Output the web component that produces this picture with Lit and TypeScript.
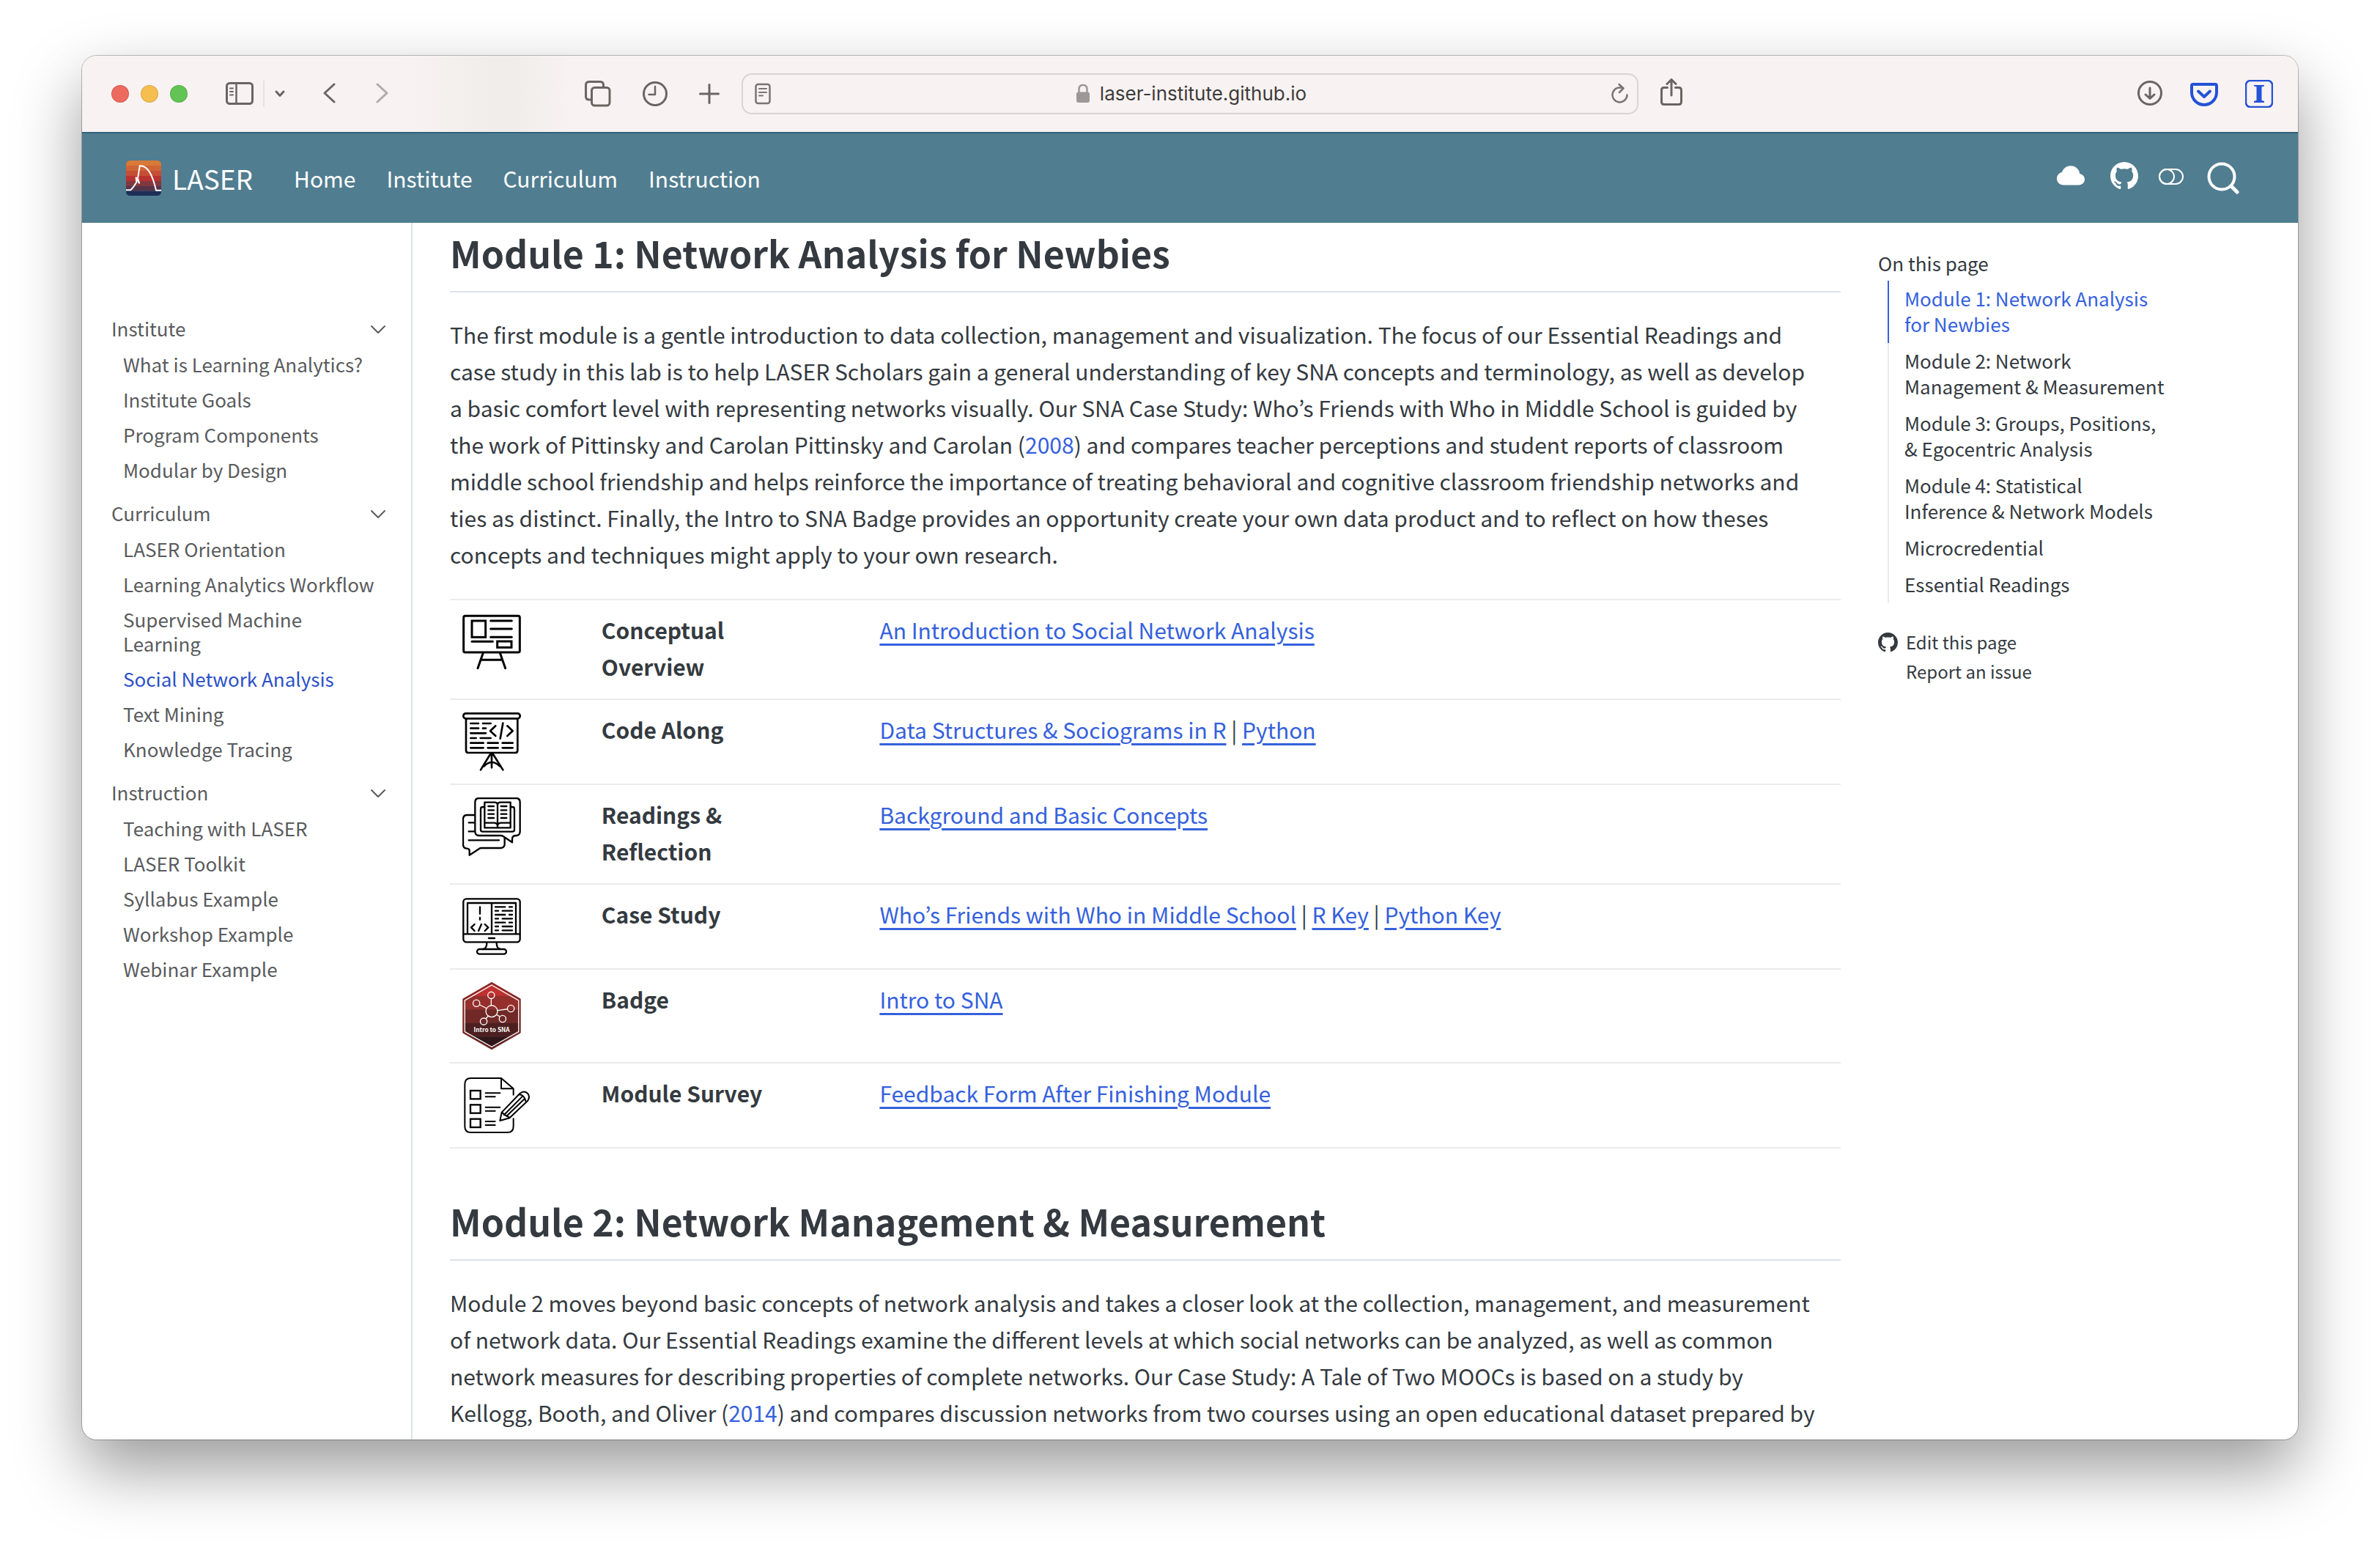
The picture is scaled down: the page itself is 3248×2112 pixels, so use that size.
import { LitElement, html, svg, css, TemplateResult } from 'lit';
import { customElement } from 'lit/decorators.js';
import { classMap } from 'lit/directives/class-map.js';

interface Group {
  title: string;
  items: string[];
}

interface Row {
  icon: TemplateResult;
  label: string;
  links: string[];
}

const NAV = ['Home', 'Institute', 'Curriculum', 'Instruction'];

const GROUPS: Group[] = [
  {
    title: 'Institute',
    items: ['What is Learning Analytics?', 'Institute Goals', 'Program Components', 'Modular by Design'],
  },
  {
    title: 'Curriculum',
    items: [
      'LASER Orientation',
      'Learning Analytics Workflow',
      'Supervised Machine Learning',
      'Social Network Analysis',
      'Text Mining',
      'Knowledge Tracing',
    ],
  },
  {
    title: 'Instruction',
    items: ['Teaching with LASER', 'LASER Toolkit', 'Syllabus Example', 'Workshop Example', 'Webinar Example'],
  },
];

const ACTIVE_PAGE = 'Social Network Analysis';

const TOC = [
  'Module 1: Network Analysis for Newbies',
  'Module 2: Network Management & Measurement',
  'Module 3: Groups, Positions, & Egocentric Analysis',
  'Module 4: Statistical Inference & Network Models',
  'Microcredential',
  'Essential Readings',
];

const githubPath = svg`<path fill="currentColor" d="M8 0C3.58 0 0 3.58 0 8c0 3.54 2.29 6.53 5.47 7.59.4.07.55-.17.55-.38 0-.19-.01-.82-.01-1.49-2.01.37-2.53-.49-2.69-.94-.09-.23-.48-.94-.82-1.13-.28-.15-.68-.52-.01-.53.63-.01 1.08.58 1.23.82.72 1.21 1.87.87 2.33.66.07-.52.28-.87.51-1.07-1.78-.2-3.64-.89-3.64-3.95 0-.87.31-1.59.82-2.15-.08-.2-.36-1.02.08-2.12 0 0 .67-.21 2.2.82.64-.18 1.32-.27 2-.27s1.36.09 2 .27c1.53-1.04 2.2-.82 2.2-.82.44 1.1.16 1.92.08 2.12.51.56.82 1.27.82 2.15 0 3.07-1.87 3.75-3.65 3.95.29.25.54.73.54 1.48 0 1.07-.01 1.93-.01 2.2 0 .21.15.46.55.38A8.01 8.01 0 0 0 16 8c0-4.42-3.58-8-8-8"/>`;

const boardIcon = html`<svg width="80" height="80" viewBox="93 108 240 240" aria-hidden="true">
  <g fill="none" stroke="#000" stroke-width="9" stroke-linecap="round" stroke-linejoin="round">
    <rect x="98" y="121" width="230" height="149" rx="7" />
    <rect x="132" y="141" width="56" height="67" stroke-linejoin="miter" />
    <path d="M209 141H295M209 174H295M209 208H295M132 226H217" />
    <rect x="236" y="225" width="58" height="25" stroke-linejoin="miter" />
    <path d="M178 272L156 335M247 272L269 335M170 301H257" />
  </g>
</svg>`;

const codeBoardIcon = html`<svg width="80" height="80" viewBox="93 516 240 240" aria-hidden="true">
  <g fill="none" stroke="#000" stroke-width="8" stroke-linecap="round" stroke-linejoin="round">
    <rect x="97" y="520" width="232" height="21" rx="10" />
    <path d="M108 543V671Q108 681 118 681H309Q319 681 319 671V543" />
    <path d="M127 561H159M177 561H209M127 581H159M177 581H189M127 601H189M127 621H149M167 621H209M127 641H179M197 641H239M257 641H299M127 661H179M197 661H239M257 661H299" />
    <path d="M229 571L207 592L229 612M259 560L248 623M277 571L299 592L277 612" />
    <path d="M213 684V742M209 684L168 751M217 684L259 751M182 736Q213 704 246 736" />
  </g>
</svg>`;

const readingIcon = html`<svg width="80" height="80" viewBox="93 864 240 240" aria-hidden="true">
  <g fill="none" stroke="#000" stroke-width="7" stroke-linecap="round" stroke-linejoin="round">
    <path d="M143 936H112Q96 936 96 953V1055Q96 1072 112 1073Q122 1074 122 1082V1100L163 1073Q165 1071 172 1071H250Q266 1069 266 1055V1030" />
    <path d="M119 967H143M119 1003H143M119 1039H243" />
    <path d="M161 867H313Q329 867 329 884V1003Q329 1020 313 1020Q297 1020 297 1034V1048L260 1023Q257 1020 250 1020H161Q145 1020 145 1003V884Q145 867 161 867Z" />
    <path d="M182 903H176Q168 903 168 912V996Q168 1004 176 1004H298Q306 1004 306 996V912Q306 903 298 903H292" />
    <path d="M184 884H225Q237 884 237 896Q237 884 249 884H290V988H184ZM184 968H225Q237 970 237 981Q237 970 249 968H290M237 896V984" />
    <path d="M199 900H222M199 916H222M199 932H222M199 948H222M251 900H274M251 916H274M251 932H274M251 948H274" />
  </g>
</svg>`;

const monitorIcon = html`<svg width="80" height="80" viewBox="93 102 240 240" aria-hidden="true">
  <g fill="none" stroke="#000" stroke-width="7" stroke-linecap="round" stroke-linejoin="round">
    <rect x="97" y="109" width="232" height="177" rx="12" />
    <path d="M99 253H327M114 250V126H312V250M213 128V250M201 270H225" />
    <path d="M165 142V170M165 186V194M143 213L129 226L143 240M171 213L159 240M185 213L199 226L185 240" />
    <path d="M228 142H268M285 142H297M228 158H240M257 158H297M228 174H268M285 174H297M228 190H240M257 190H297M228 206H268M285 206H297M228 222H240M257 222H297M228 238H240M257 238H297" />
    <path d="M193 289Q193 314 177 315M233 289Q233 314 249 315" />
    <rect x="153" y="315" width="120" height="20" rx="10" />
  </g>
</svg>`;

const badgeIcon = html`<svg width="80" height="92" viewBox="93 450 240 278" aria-hidden="true">
  <defs>
    <clipPath id="hex"><path d="M213 450L333 519V659L213 728L93 659V519Z" /></clipPath>
  </defs>
  <g clip-path="url(#hex)">
    <rect x="93" y="450" width="240" height="58" fill="#bd322f" />
    <rect x="93" y="507" width="240" height="56" fill="#942f2c" />
    <rect x="93" y="562" width="240" height="57" fill="#702926" />
    <rect x="93" y="618" width="240" height="57" fill="#4d1f20" />
    <rect x="93" y="674" width="240" height="56" fill="#2f1618" />
  </g>
  <path d="M213 453L330 521V657L213 725L96 657V521Z" fill="none" stroke="#7b2624" stroke-width="5" />
  <g fill="none" stroke="#fff" stroke-width="4">
    <path d="M213 462L324 525V654L213 717L102 654V525Z" />
    <circle cx="213" cy="570" r="24" />
    <circle cx="211" cy="504" r="14" />
    <circle cx="150" cy="537" r="14" />
    <circle cx="292" cy="559" r="14" />
    <circle cx="258" cy="601" r="14" />
    <circle cx="180" cy="612" r="14" />
    <path d="M211 518V546M163 543L192 558M237 567L278 561M233 584L247 592M199 590L188 601" />
  </g>
  <text x="213" y="655" text-anchor="middle" fill="#fff" font-family="'Noto Sans CJK KR', sans-serif" font-weight="700" font-size="25">Intro to SNA</text>
</svg>`;

const surveyIcon = html`<svg width="92" height="80" viewBox="93 834 276 240" aria-hidden="true">
  <g fill="none" stroke="#000" stroke-width="6" stroke-linecap="round" stroke-linejoin="round">
    <path d="M302 911V886L252 843H128Q103 843 103 868V1040Q103 1065 128 1065H277Q302 1065 302 1040V1009" />
    <path d="M252 845V886H300" />
    <path d="M188 904H247M188 919H227M188 962H247M188 977H227M188 1020H227M188 1035H227" />
    <g stroke-linejoin="miter" stroke-width="7">
      <rect x="126" y="894" width="41" height="34" />
      <rect x="126" y="952" width="41" height="34" />
      <rect x="126" y="1010" width="41" height="34" />
    </g>
    <path d="M247 1017L254 983L328 906Q345 892 360 905Q372 919 360 936L286 1006ZM254 983Q262 985 264 993Q274 996 274 998Q284 1000 286 1006M264 993L337 919M274 998L348 927M324 910Q346 910 352 937" />
  </g>
</svg>`;

const ROWS: Row[] = [
  { icon: boardIcon, label: 'Conceptual Overview', links: ['An Introduction to Social Network Analysis'] },
  { icon: codeBoardIcon, label: 'Code Along', links: ['Data Structures & Sociograms in R', 'Python'] },
  { icon: readingIcon, label: 'Readings & Reflection', links: ['Background and Basic Concepts'] },
  { icon: monitorIcon, label: 'Case Study', links: ['Who’s Friends with Who in Middle School', 'R Key', 'Python Key'] },
  { icon: badgeIcon, label: 'Badge', links: ['Intro to SNA'] },
  { icon: surveyIcon, label: 'Module Survey', links: ['Feedback Form After Finishing Module'] },
];

const resets = css`
  :host,
  * {
    box-sizing: border-box;
  }
  button {
    display: block;
    padding: 0;
    border: 0;
    background: none;
    color: inherit;
    font: inherit;
    text-align: left;
  }
  svg {
    display: block;
    flex: none;
  }
  a {
    color: inherit;
    text-decoration: none;
  }
  ul {
    margin: 0;
    padding: 0;
    list-style: none;
  }
`;

@customElement('browser-toolbar')
export class BrowserToolbar extends LitElement {
  static styles = [
    resets,
    css`
      :host {
        display: grid;
        grid-template-columns: 900px 1fr 900px;
        align-items: center;
        height: 104px;
        color: #6b6463;
        background: linear-gradient(90deg, #f8f3f2 440px, #f1edea 560px, #f1edea 590px, #f8f3f2 670px);
      }
      .group {
        display: flex;
        align-items: center;
      }
      .left {
        padding: 0 30px 0 40px;
      }
      .lights {
        gap: 16px;
        margin-right: 52px;
      }
      .light {
        width: 24px;
        height: 24px;
        border-radius: 50%;
        border: 1px solid rgba(0, 0, 0, 0.12);
      }
      .close {
        background: #ed6a5f;
      }
      .minimize {
        background: #f5bf4f;
      }
      .zoom {
        background: #61c454;
      }
      .panel {
        gap: 13px;
      }
      .divider {
        width: 2px;
        height: 36px;
        background: #e8e3e2;
      }
      .history {
        gap: 54px;
        margin-left: 51px;
      }
      .forward {
        opacity: 0.5;
      }
      .tools {
        gap: 42px;
        margin-left: auto;
      }
      .address {
        display: grid;
        grid-template-columns: auto 1fr auto;
        align-items: center;
        height: 56px;
        padding: 0 11px 0 16px;
        border: 2px solid #dad5d4;
        border-radius: 14px;
        color: #7a7473;
      }
      .site {
        display: flex;
        justify-content: center;
        align-items: center;
        gap: 13px;
      }
      .url {
        field-sizing: content;
        padding: 0;
        border: 0;
        background: none;
        color: #3f3b3b;
        font: 400 26px/40px Inter, 'Liberation Sans', sans-serif;
      }
      .right {
        justify-content: space-between;
        padding: 0 34px 0 30px;
      }
      .extensions {
        gap: 37px;
      }
    `,
  ];

  render() {
    return html`
      <div class="group left">
        <div class="group lights">
          <button class="light close" aria-label="Close"></button>
          <button class="light minimize" aria-label="Minimize"></button>
          <button class="light zoom" aria-label="Zoom"></button>
        </div>
        <div class="group panel">
          <button aria-label="Show sidebar">
            <svg width="38" height="36" viewBox="308 109 38 36" fill="none" stroke="currentColor" stroke-width="3" stroke-linecap="round">
              <rect x="309.500" y="112.500" width="35" height="28" rx="4" />
              <path d="M322.500 113V140" stroke-width="2.500" />
              <path d="M314 119.500H318M314 124H318M314 128.500H318" stroke-width="2" />
            </svg>
          </button>
          <span class="divider"></span>
          <button aria-label="Sidebar options">
            <svg width="16" height="36" viewBox="374 110 16 36" fill="none" stroke="currentColor" stroke-width="3" stroke-linecap="round" stroke-linejoin="round">
              <path d="M377 125L382 130.500L387 125" />
            </svg>
          </button>
        </div>
        <div class="group history">
          <button aria-label="Back">
            <svg width="18" height="36" viewBox="441 110 18 36" fill="none" stroke="currentColor" stroke-width="3" stroke-linecap="round" stroke-linejoin="round">
              <path d="M456 115L443 127L456 139" />
            </svg>
          </button>
          <button class="forward" aria-label="Forward">
            <svg width="18" height="36" viewBox="513 110 18 36" fill="none" stroke="currentColor" stroke-width="3" stroke-linecap="round" stroke-linejoin="round">
              <path d="M515 115L528 127L515 139" />
            </svg>
          </button>
        </div>
        <div class="group tools">
          <button aria-label="Tab overview">
            <svg width="36" height="38" viewBox="798 108 36 38" fill="none" stroke="currentColor" stroke-width="3" stroke-linejoin="round">
              <path d="M806 135H804Q799.500 135 799.500 130.500V115Q799.500 110.500 804 110.500H819Q823.500 110.500 823.500 115V117" />
              <rect x="807.500" y="118.500" width="24.500" height="24.500" rx="4" />
            </svg>
          </button>
          <button aria-label="History">
            <svg width="36" height="36" viewBox="876 109 36 36" fill="none" stroke="currentColor" stroke-width="3" stroke-linecap="round" stroke-linejoin="round">
              <circle cx="894" cy="127" r="15.500" />
              <path d="M894 117V128H885.500" stroke-width="2.500" />
            </svg>
          </button>
          <button aria-label="New tab">
            <svg width="28" height="36" viewBox="954 109 28 36" fill="none" stroke="currentColor" stroke-width="3" stroke-linecap="round">
              <path d="M968 114.500V139.500M955.500 127H980.500" />
            </svg>
          </button>
        </div>
      </div>
      <div class="address">
        <button aria-label="Reader">
          <svg width="22" height="30" viewBox="1030 113 22 30" fill="none" stroke="currentColor" stroke-width="2.500" stroke-linecap="round">
            <rect x="1031.500" y="115" width="19" height="26" rx="3" />
            <path d="M1036 121H1046M1036 126H1046M1036 130.500H1041" stroke-width="2" />
          </svg>
        </button>
        <label class="site">
          <svg width="20" height="28" viewBox="1467 116 20 28" role="img" aria-label="Address">
            <path d="M1471.500 129V124Q1471.500 118 1477 118T1482.500 124V129" fill="none" stroke="#9c9897" stroke-width="2.500" />
            <rect x="1468" y="127.500" width="18" height="14.500" rx="3" fill="#9c9897" />
          </svg>
          <input class="url" type="text" size="22" value="laser-institute.github.io" />
        </label>
        <button aria-label="Reload">
          <svg width="24" height="30" viewBox="2200 114 24 30" fill="none" stroke="currentColor" stroke-width="2.500" stroke-linecap="round" stroke-linejoin="round">
            <path d="M2216 121.500A10 10 0 1 0 2221.500 130.500M2210.500 116L2216.500 121.500L2211 127" />
          </svg>
        </button>
      </div>
      <div class="group right">
        <button aria-label="Share">
          <svg width="30" height="42" viewBox="2266 107 30 42" fill="none" stroke="currentColor" stroke-width="3" stroke-linecap="round" stroke-linejoin="round">
            <path d="M2275.500 119.500H2271Q2267.500 119.500 2267.500 123V139Q2267.500 142.500 2271 142.500H2291Q2294.500 142.500 2294.500 139V123Q2294.500 119.500 2291 119.500H2286.500" />
            <path d="M2281 130V109M2275 114.500L2281 108.500L2287 114.500" />
          </svg>
        </button>
        <div class="group extensions">
          <button aria-label="Downloads">
            <svg width="36" height="38" viewBox="2916 109 36 38" fill="none" stroke="currentColor" stroke-width="3" stroke-linecap="round" stroke-linejoin="round">
              <circle cx="2934" cy="127" r="15.500" />
              <path d="M2934 120V134M2928 129L2934 134.500L2940 129" />
            </svg>
          </button>
          <button aria-label="Pocket">
            <svg width="38" height="38" viewBox="2990 109 38 38" fill="none" stroke="#2452d6" stroke-width="4" stroke-linecap="round" stroke-linejoin="round">
              <path d="M2994 115H3024Q3026 115 3026 117V126A17 17 0 0 1 2992 126V117Q2992 115 2994 115Z" />
              <path d="M3001 124.500L3009 132L3017 124.500" />
            </svg>
          </button>
          <button aria-label="Instapaper">
            <svg width="38" height="38" viewBox="3064 109 38 38" fill="none">
              <rect x="3065" y="110" width="36" height="36" rx="6" stroke="#2452d6" stroke-width="2.500" />
              <path d="M3076 116H3090V117.500L3086.500 118.500V137L3090 138V140H3076V138L3079.500 137V118.500L3076 117.500Z" fill="#2452d6" />
            </svg>
          </button>
        </div>
      </div>
    `;
  }
}

@customElement('site-navbar')
export class SiteNavbar extends LitElement {
  static styles = [
    resets,
    css`
      :host {
        display: flex;
        align-items: center;
        height: 124px;
        padding: 0 80px 0 60px;
        border-top: 2px solid #31617a;
        background: #507d90;
        color: #fff;
      }
      .brand {
        display: flex;
        align-items: center;
        gap: 15px;
        margin-right: 56px;
        font-size: 37px;
      }
      .links {
        display: flex;
        gap: 42px;
        flex: 1;
      }
      .icons {
        display: flex;
        align-items: center;
      }
      .cloud {
        margin-right: 35px;
      }
      .github {
        margin-right: 28px;
      }
      .toggle {
        margin-right: 32px;
      }
    `,
  ];

  render() {
    return html`
      <a class="brand" href="#home">
        <svg width="48" height="48" viewBox="66 54 144 144" aria-hidden="true">
          <defs>
            <clipPath id="logo"><rect x="66" y="54" width="144" height="144" rx="16" /></clipPath>
          </defs>
          <g clip-path="url(#logo)">
            <rect x="66" y="54" width="144" height="21" fill="#d97a38" />
            <rect x="66" y="75" width="144" height="21" fill="#cf6436" />
            <rect x="66" y="96" width="144" height="21" fill="#c54e35" />
            <rect x="66" y="117" width="144" height="21" fill="#b93230" />
            <rect x="66" y="138" width="144" height="21" fill="#82383f" />
            <rect x="66" y="159" width="144" height="20" fill="#56344b" />
            <rect x="66" y="179" width="144" height="20" fill="#1d2f57" />
            <path d="M66 175H84C94 168 102 154 109 142L107 124L120 146L114 128L122 76C158 74 176 120 189 176H210" fill="none" stroke="#fff" stroke-width="6" stroke-linejoin="round" />
          </g>
        </svg>
        <span>LASER</span>
      </a>
      <nav class="links" aria-label="Main">${NAV.map((n) => html`<a href="#${n.toLowerCase()}">${n}</a>`)}</nav>
      <div class="icons">
        <a class="cloud" href="#cloud" aria-label="Cloud">
          <svg width="38" height="44" viewBox="2807 220 38 44">
            <path transform="translate(2807 220.500) scale(2.375)" fill="currentColor" d="M4.406 3.342A5.530 5.530 0 0 1 8 2c2.690 0 4.923 2 5.166 4.579C14.758 6.804 16 8.137 16 9.773 16 11.569 14.502 13 12.687 13H3.781C1.708 13 0 11.366 0 9.318c0-1.763 1.266-3.223 2.942-3.593.143-.863.698-1.723 1.464-2.383z" />
          </svg>
        </a>
        <a class="github" href="#github" aria-label="GitHub">
          <svg width="38" height="44" viewBox="2880 220 38 44">
            <g transform="translate(2880 220) scale(2.375)">${githubPath}</g>
          </svg>
        </a>
        <button class="toggle" aria-label="Toggle dark mode">
          <svg width="34" height="44" viewBox="2946 220 34 44" fill="none" stroke="currentColor" stroke-width="2">
            <rect x="2947" y="230" width="32" height="20" rx="10" />
            <circle cx="2957" cy="240" r="10" />
            <path d="M2963 230.500A10 10 0 0 1 2963 249.500" stroke="none" />
          </svg>
        </button>
        <button aria-label="Search">
          <svg width="44" height="44" viewBox="3012 220 44 44" fill="none" stroke="currentColor" stroke-linecap="round">
            <circle cx="3032" cy="240" r="17.500" stroke-width="4" />
            <path d="M3045.500 253.500L3053 261" stroke-width="5" />
          </svg>
        </button>
      </div>
    `;
  }
}

@customElement('site-sidebar')
export class SiteSidebar extends LitElement {
  static styles = [
    resets,
    css`
      :host {
        display: block;
        padding: 127px 35px 0 40px;
        border-right: 2px solid #dee2e6;
        color: #595b5d;
        font-size: 26px;
        line-height: 33px;
      }
      .section {
        margin-bottom: 26px;
      }
      .heading {
        display: flex;
        justify-content: space-between;
        align-items: center;
        width: 100%;
        margin-bottom: 16px;
      }
      .items {
        display: grid;
        gap: 15px;
        padding: 0 8px 0 16px;
      }
      .active {
        color: #2b50c8;
      }
    `,
  ];

  render() {
    return html`<nav aria-label="Sidebar">
      ${GROUPS.map(
        (g) => html`<section class="section">
          <button class="heading" aria-expanded="true">
            <span>${g.title}</span>
            <svg width="20" height="16" viewBox="0 0 20 16" fill="none" stroke="currentColor" stroke-width="2" stroke-linecap="round" stroke-linejoin="round" aria-hidden="true">
              <path d="M1 5L10 14L19 5" />
            </svg>
          </button>
          <ul class="items">
            ${g.items.map((i) => html`<li><a href="#page" class=${classMap({ active: i === ACTIVE_PAGE })}>${i}</a></li>`)}
          </ul>
        </section>`
      )}
    </nav>`;
  }
}

@customElement('page-contents')
export class PageContents extends LitElement {
  static styles = [
    resets,
    css`
      :host {
        display: block;
        padding-top: 37px;
        font-size: 26px;
        line-height: 35px;
      }
      .title {
        margin: 0 0 7px;
        font: inherit;
      }
      .list {
        max-width: 383px;
        margin: 0 0 33px 13px;
      }
      .entry {
        display: block;
        padding: 6px 0 9px 21px;
        border-left: 2px solid #e9ebee;
      }
      .current {
        border-color: #3561dd;
        color: #3561dd;
      }
      .actions {
        font-size: 24px;
        line-height: 40px;
      }
      .action {
        display: grid;
        grid-template-columns: 27px 1fr;
        align-items: center;
        gap: 11px;
      }
      .label {
        grid-column: 2;
      }
    `,
  ];

  render() {
    return html`
      <nav aria-label="On this page">
        <h2 class="title">On this page</h2>
        <ul class="list">
          ${TOC.map((t, i) => html`<li><a href="#section" class=${classMap({ entry: true, current: i === 0 })}>${t}</a></li>`)}
        </ul>
        <div class="actions">
          <a class="action" href="#edit">
            <svg width="27" height="27" viewBox="0 0 16 16" aria-hidden="true">${githubPath}</svg>
            <span class="label">Edit this page</span>
          </a>
          <a class="action" href="#issue"><span class="label">Report an issue</span></a>
        </div>
      </nav>
    `;
  }
}

@customElement('module-article')
export class ModuleArticle extends LitElement {
  static styles = [
    resets,
    css`
      :host {
        display: block;
        min-width: 0;
        padding: 10px 51px 0;
        font-size: 30px;
        line-height: 50px;
      }
      .title {
        margin: 0 0 32px;
        padding-bottom: 23px;
        border-bottom: 2px solid #dee2e6;
        font-size: 50px;
        font-weight: 700;
        line-height: 60px;
      }
      .text {
        margin: 0 0 36px;
        padding-right: 30px;
      }
      .cite,
      .link {
        color: #3561dd;
      }
      .link {
        text-decoration: underline;
        text-decoration-thickness: 3px;
        text-underline-offset: 6px;
      }
      .resources {
        width: 100%;
        margin-bottom: 68px;
        border-spacing: 0;
        border-top: 2px solid #ebebeb;
        table-layout: fixed;
      }
      .icon,
      .label,
      .links {
        padding: 15px 17px 19px;
        border-bottom: 2px solid #ebebeb;
        text-align: left;
        vertical-align: top;
      }
      .icon {
        width: 10%;
        padding: 17px;
      }
      .label {
        width: 20%;
        padding-right: 80px;
        font-weight: 700;
      }
    `,
  ];

  render() {
    return html`
      <h2 class="title">Module 1: Network Analysis for Newbies</h2>
      <p class="text">
        The first module is a gentle introduction to data collection, management and visualization. The focus of our
        Essential Readings and case study in this lab is to help LASER Scholars gain a general understanding of key SNA
        concepts and terminology, as well as develop a basic comfort level with representing networks visually. Our SNA
        Case Study: Who’s Friends with Who in Middle School is guided by the work of Pittinsky and Carolan Pittinsky and
        Carolan (<a class="cite" href="#ref-2008">2008</a>) and compares teacher perceptions and student reports of
        classroom middle school friendship and helps reinforce the importance of treating behavioral and cognitive
        classroom friendship networks and ties as distinct. Finally, the Intro to SNA Badge provides an opportunity
        create your own data product and to reflect on how theses concepts and techniques might apply to your own
        research.
      </p>
      <table class="resources">
        <tbody>
          ${ROWS.map(
            (r) => html`<tr>
              <td class="icon">${r.icon}</td>
              <th class="label" scope="row">${r.label}</th>
              <td class="links">${r.links.map((l, i) => html`${i ? ' | ' : ''}<a class="link" href="#resource">${l}</a>`)}</td>
            </tr>`
          )}
        </tbody>
      </table>
      <h2 class="title">Module 2: Network Management &amp; Measurement</h2>
      <p class="text">
        Module 2 moves beyond basic concepts of network analysis and takes a closer look at the collection, management,
        and measurement of network data. Our Essential Readings examine the different levels at which social networks
        can be analyzed, as well as common network measures for describing properties of complete networks. Our Case
        Study: A Tale of Two MOOCs is based on a study by Kellogg, Booth, and Oliver
        (<a class="cite" href="#ref-2014">2014</a>) and compares discussion networks from two courses using an open
        educational dataset prepared by
      </p>
    `;
  }
}

@customElement('app-root')
export class AppRoot extends LitElement {
  static styles = css`
    :host {
      display: flex;
      box-sizing: border-box;
      height: 100vh;
      padding: 76px 112px 148px;
      overflow: hidden;
      background: #fff;
      color: #343a40;
      font-family: 'Noto Sans CJK KR', 'Noto Sans', sans-serif;
      font-size: 30px;
    }
    .window {
      display: flex;
      flex: 1;
      flex-direction: column;
      min-width: 0;
      overflow: hidden;
      border-radius: 20px;
      background: #fff;
      box-shadow: 0 0 0 1px rgba(0, 0, 0, 0.25), 0 40px 90px rgba(0, 0, 0, 0.4);
    }
    .page {
      display: grid;
      flex: 1;
      grid-template-columns: 451px 1fr 573px;
      min-height: 0;
      overflow: hidden;
    }
  `;

  render() {
    return html`
      <div class="window">
        <browser-toolbar></browser-toolbar>
        <site-navbar></site-navbar>
        <div class="page">
          <site-sidebar></site-sidebar>
          <module-article></module-article>
          <page-contents></page-contents>
        </div>
      </div>
    `;
  }
}
